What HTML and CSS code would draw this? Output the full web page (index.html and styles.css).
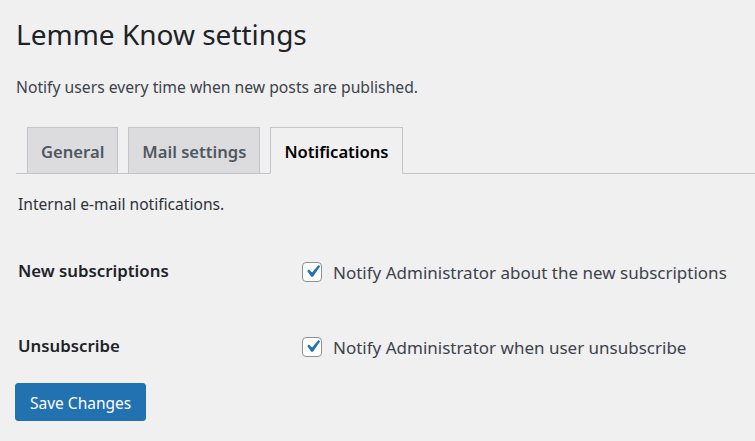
FILE: index.html
```html
<!DOCTYPE html>
<html lang="en">
<head>
<meta charset="utf-8">
<title>Lemme Know settings</title>
<link rel="stylesheet" href="styles.css">
</head>
<body>
<div class="wrap">
  <h1 class="title">Lemme Know settings</h1>
  <p class="intro">Notify users every time when new posts are published.</p>
  <nav class="tabs">
    <a class="tab" href="#">General</a>
    <a class="tab" href="#">Mail settings</a>
    <a class="tab active" href="#">Notifications</a>
  </nav>
  <p class="section-desc">Internal e-mail notifications.</p>
  <div class="form-table">
    <div class="row">
      <div class="label">New subscriptions</div>
      <label class="field"><span class="check"><svg viewBox="0 0 20 20" width="20" height="20"><path d="M14.83 4.89l1.34.94-5.81 8.38H9.02L5.78 9.67l1.34-1.25 2.57 2.4z" fill="#2271b1"/></svg></span>Notify Administrator about the new subscriptions</label>
    </div>
    <div class="row">
      <div class="label">Unsubscribe</div>
      <label class="field"><span class="check"><svg viewBox="0 0 20 20" width="20" height="20"><path d="M14.83 4.89l1.34.94-5.81 8.38H9.02L5.78 9.67l1.34-1.25 2.57 2.4z" fill="#2271b1"/></svg></span>Notify Administrator when user unsubscribe</label>
    </div>
  </div>
  <button class="button-primary" type="button">Save Changes</button>
</div>
</body>
</html>
```
FILE: styles.css
```css
html, body {
  margin: 0;
  padding: 0;
  background: #f0f0f1;
}
body {
  font-family: "Noto Sans", "Open Sans", sans-serif;
  color: #3c434a;
  font-size: 15px;
}
.wrap {
  padding: 16px 0 0 16px;
}
.title {
  margin: 0;
  font-size: 28px;
  font-weight: 400;
  color: #1d2327;
  line-height: 36px;
}
.intro {
  margin: 24px 0 0;
  font-size: 15.7px;
  line-height: 22px;
}
.tabs {
  display: flex;
  gap: 10px;
  margin-top: 29px;
  padding-left: 11px;
  border-bottom: 1px solid #c3c4c7;
  align-items: flex-end;
}
.tab {
  display: block;
  margin-bottom: -1px;
  padding: 2px 13px 0;
  line-height: 43px;
  border: 1px solid #c3c4c7;
  background: #dcdcde;
  color: #50575e;
  font-weight: 600;
  font-size: 16.6px;
  text-decoration: none;
}
.tab.active {
  background: #f0f0f1;
  border-bottom-color: #f0f0f1;
  color: #000;
}
.section-desc {
  margin: 19px 0 0 2px;
  font-size: 15.6px;
  line-height: 22px;
  color: #2c3338;
}
.form-table {
  margin-top: 44px;
  display: flex;
  flex-direction: column;
  gap: 49px;
}
.row {
  display: grid;
  grid-template-columns: 284px 1fr;
  align-items: start;
  padding-left: 2px;
}
.label {
  font-weight: 600;
  color: #1d2327;
  font-size: 16.8px;
  line-height: 24px;
}
.field {
  display: flex;
  align-items: center;
  gap: 11px;
  padding-top: 2px;
  font-size: 17px;
  line-height: 24px;
  color: #3c434a;
}
.check {
  box-sizing: border-box;
  width: 20px;
  height: 20px;
  margin-top: -3px;
  border: 1px solid #8c8f94;
  border-radius: 4px;
  background: #fff;
  display: flex;
  align-items: center;
  justify-content: center;
  flex: none;
}
.check svg {
  width: 25px;
  height: 25px;
  flex: none;
}
.button-primary {
  display: block;
  margin-top: 23px;
  margin-left: -1px;
  background: #2271b1;
  border: 1px solid #2271b1;
  border-radius: 3px;
  color: #fff;
  font-family: inherit;
  font-size: 15.5px;
  height: 38px;
  padding: 2px 14px 0;
  cursor: pointer;
}
```
